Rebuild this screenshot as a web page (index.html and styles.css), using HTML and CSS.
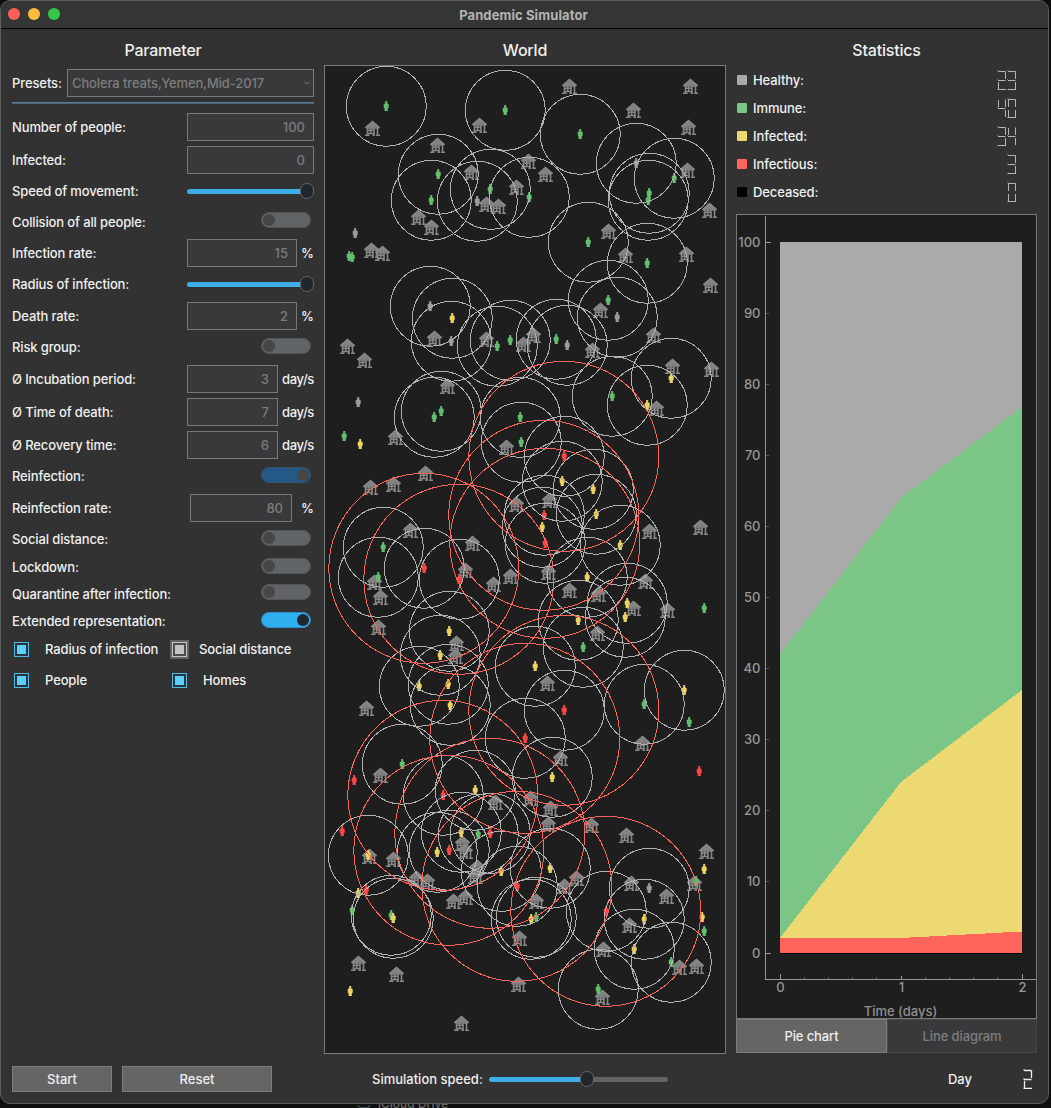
FILE: index.html
```html
<!DOCTYPE html>
<html lang="en">
<head>
<meta charset="utf-8">
<title>Pandemic Simulator</title>
<link rel="stylesheet" href="styles.css">
</head>
<body>
<div class="window">
  <header class="titlebar">
    <div class="lights"><i class="close"></i><i class="min"></i><i class="max"></i></div>
    <h1>Pandemic Simulator</h1>
  </header>

  <main class="columns">
    <section class="params">
      <h2>Parameter</h2>
      <div class="row preset"><label>Presets:</label><div class="combo"><span>Cholera treats,Yemen,Mid-2017</span><svg width="6" height="4" viewBox="0 0 6 4"><path d="M.5 .8L3 3L5.5 .8" fill="none" stroke="#77787a"/></svg></div></div>
      <hr>
      <div class="form">
        <div class="row h28"><label>Number of people:</label><div class="box w127">100</div></div>
        <div class="row h28"><label>Infected:</label><div class="box w127">0</div></div>
        <div class="row h24"><label>Speed of movement:</label><div class="slider full"><b></b></div></div>
        <div class="row h26"><label>Collision of all people:</label><div class="toggle"></div></div>
        <div class="row h28"><label>Infection rate:</label><div class="box w110">15</div><span class="unit">%</span></div>
        <div class="row h25"><label>Radius of infection:</label><div class="slider full"><b></b></div></div>
        <div class="row h28"><label>Death rate:</label><div class="box w110">2</div><span class="unit">%</span></div>
        <div class="row h25"><label>Risk group:</label><div class="toggle"></div></div>
        <div class="row h28"><label>Ø Incubation period:</label><div class="box w91">3</div><span class="unit days">day/s</span></div>
        <div class="row h28"><label>Ø Time of death:</label><div class="box w91">7</div><span class="unit days">day/s</span></div>
        <div class="row h28"><label>Ø Recovery time:</label><div class="box w91">6</div><span class="unit days">day/s</span></div>
        <div class="row h25"><label>Reinfection:</label><div class="toggle on dim"></div></div>
        <div class="row h28"><label>Reinfection rate:</label><div class="box w102">80</div><span class="unit">%</span></div>
        <div class="row h24"><label>Social distance:</label><div class="toggle"></div></div>
        <div class="row h22"><label>Lockdown:</label><div class="toggle"></div></div>
        <div class="row h21"><label>Quarantine after infection:</label><div class="toggle"></div></div>
        <div class="row h25"><label>Extended representation:</label><div class="toggle on"></div></div>
      </div>
      <div class="checks">
        <div class="check"><i></i><span>Radius of infection</span></div>
        <div class="check gray"><i></i><span>Social distance</span></div>
        <div class="check"><i></i><span>People</span></div>
        <div class="check wide"><i></i><span>Homes</span></div>
      </div>
    </section>

    <section class="world">
      <h2>World</h2>
      <svg id="world" width="402" height="989" viewBox="324 65 402 989">
        <defs>
          <g id="home">
            <path d="M.5 7L7.5 1L14.5 7" fill="none" stroke="#898989" stroke-width="2.200"/>
            <path d="M7.5 1L2 6.500H13Z" fill="#828282"/>
            <path d="M2.500 6V14M12.500 6V14M9 7V14M2.500 12.500H9M5.700 6V12M2.500 9.200H9M2.500 7H12.500M0 14.200H4.500M7.500 14.200H10M11 14.200H15" fill="none" stroke="#868686" stroke-width="1.600"/>
          </g>
          <path id="person" d="M-1 -5H1V-2.700L2.500 -1.700V1.500L1.600 2.500V5H-1.600V2.500L-2.500 1.500V-1.700L-1 -2.700Z"/>
        </defs>
      </svg>
    </section>

    <section class="stats">
      <h2>Statistics</h2>
      <ul class="legend">
        <li><i class="healthy"></i><span>Healthy:</span><div class="lcd" data-value="23"></div></li>
        <li><i class="immune"></i><span>Immune:</span><div class="lcd" data-value="40"></div></li>
        <li><i class="infected"></i><span>Infected:</span><div class="lcd" data-value="34"></div></li>
        <li><i class="infectious"></i><span>Infectious:</span><div class="lcd" data-value="3"></div></li>
        <li><i class="deceased"></i><span>Deceased:</span><div class="lcd" data-value="0"></div></li>
      </ul>
      <svg class="chart" width="301" height="805" viewBox="736 214 301 805">
        <g shape-rendering="crispEdges">
          <path fill="#aaaaaa" d="M780 242H1022V407L901 498L780 654Z"/>
          <path fill="#7bc587" d="M780 654L901 498L1022 407V690L901 782L780 938Z"/>
          <path fill="#ecd972" d="M780 938L901 782L1022 690V932L901 938Z"/>
          <path fill="#ff655a" d="M780 938H901L1022 931.500V953H780Z"/>
          <path stroke="#969696" fill="none" d="M765.500 216V979.500H1037M765 242.500h6M765 953.500h6M780.500 979v-5M901.500 979v-3M1022.500 979v-5"/>
          <path stroke="#000" d="M780 953.500h242"/>
        </g>
        <path id="ticks" stroke="#555" fill="none" shape-rendering="crispEdges"/>
        <g id="labels"></g>
        <text x="900.500" y="1016" text-anchor="middle" fill="#8e8e8e">Time (days)</text>
      </svg>
      <div class="tabs"><button class="active">Pie chart</button><button>Line diagram</button></div>
    </section>
  </main>

  <footer>
    <button class="start">Start</button>
    <button class="reset">Reset</button>
    <label class="speed">Simulation speed:</label>
    <div class="slider half"><b></b></div>
    <span class="day">Day</span>
    <div class="lcd bright" data-value="2"></div>
  </footer>
</div>
<div class="desktop"><i></i><span>iCloud Drive</span></div>
<script src="script.js"></script>
</body>
</html>
```

FILE: styles.css
```css
* { box-sizing: border-box; }
body {
  margin: 0; width: 1051px; height: 1108px; overflow: hidden; background: #0d0d0e;
  font: 500 13px/16px Inter, "Liberation Sans", sans-serif; color: #efefef;
}
.window {
  width: 1049px; height: 1104px; background: #323232;
  border: 1px solid #5c5d5d; border-radius: 10px; overflow: hidden;
}
.titlebar {
  height: 28px; background: #343635; border-bottom: 1px solid #000;
  display: grid; grid-template-columns: 65px 1fr 65px; align-items: center;
}
.titlebar h1 { margin: 0; font-size: 13px; font-weight: 700; text-align: center; color: #b3b4b4; line-height: 24px; letter-spacing: .1px; position: relative; left: -1px; }
.lights { display: flex; gap: 8px; padding-left: 7px; margin-top: -1px; }
.lights i { width: 12px; height: 12px; border-radius: 50%; }
.close { background: #fe5f57; }
.min { background: #febb40; }
.max { background: #33c748; }

.columns { display: grid; grid-template-columns: 302px 402px 301px; column-gap: 10px; padding-left: 11px; height: 1025px; }
h2 { margin: 0; height: 36px; padding-top: 11px; font-size: 16px; font-weight: 500; line-height: 20px; text-align: center; letter-spacing: -.2px; }

.params { padding-top: 4px; margin-top: -4px; }
.row { display: flex; align-items: center; }
.row label { margin-right: auto; white-space: nowrap; letter-spacing: -.13px; }
.preset { height: 28px; margin-top: 4px; }
.row.preset label { margin-right: 0; width: 55px; letter-spacing: -.1px; }
.combo { flex: 1; height: 28px; border: 1px solid #77787a; background: #39393b; color: #7c7c7d; display: flex; align-items: center; justify-content: space-between; padding: 0 3px 0 4px; letter-spacing: -.12px; }
hr { margin: 5px 0 9px; border: 0; height: 2px; background: linear-gradient(#5d86a3, #4a5966); }
.form { display: flex; flex-direction: column; gap: 5px; }
.h28 { height: 28px; } .h26 { height: 26px; } .h25 { height: 25px; padding-bottom: 1px; } .h24 { height: 24px; } .h22 { height: 22px; } .h21 { height: 21px; }
.h26 label { padding-top: 1px; }
.box { height: 28px; border: 1px solid #77787a; background: #39393b; color: #7c7c7d; text-align: right; line-height: 27px; padding-right: 8px; }
.w127 { width: 127px; } .w110 { width: 110px; } .w91 { width: 91px; } .w102 { width: 102px; margin-right: 5px; }
.unit { margin-left: 5px; width: 12px; display: flex; justify-content: flex-end; }
.unit.days { width: 31px; letter-spacing: -.35px; }
.slider { height: 5px; border-radius: 3px; background: #606467; display: flex; align-items: center; }
.slider b { width: 14px; height: 16px; border-radius: 7px; border: 1px solid #626567; background: #20262b; }
.slider.full { width: 127px; background: #3daee9; justify-content: flex-end; }
.toggle { width: 50px; height: 16px; border-radius: 8px; background: #606467; border: 1px solid #54575a; margin: -2px 3px 0 0; display: flex; align-items: center; padding: 0 1px; }
.toggle::before { content: ""; width: 12px; height: 12px; border-radius: 50%; background: #464646; }
.toggle.on { justify-content: flex-end; background: #2fafee; border-color: #2b8dc1; }
.toggle.on::before { background: #22272b; }
.toggle.on.dim { background: #235887; border-color: #35536b; }
.toggle.on.dim::before { background: #464646; }
.h21 .toggle { margin-top: -3px; }
.checks { display: grid; grid-template-columns: 158px 1fr; row-gap: 11px; margin-top: 5px; padding-left: 2px; letter-spacing: -.13px; }
.check { display: flex; align-items: center; height: 20px; white-space: nowrap; }
.check i { width: 15px; height: 15px; border: 1px solid #4eb9e4; background: #5bcfff; box-shadow: inset 0 0 0 2px #2b333a; margin-right: 16px; }
.check.gray i { border-color: #c4c4c4; background: #c4c4c4; box-shadow: inset 0 0 0 2px #4b4d4e, 0 0 0 2px #606467; margin-right: 12px; }

#world { display: block; background: #1e1e1e; border: 0; outline: 1px solid #77787a; outline-offset: -1px; }
#world circle { fill: none; shape-rendering: crispEdges; }
.near { r: 40px; stroke: #b0b0b0; }
.far { r: 95px; stroke: #ff655a; }

.legend { list-style: none; margin: 0; padding: 1px 20px 8px 0; height: 149px; letter-spacing: -.1px; }
.legend li { display: flex; align-items: center; height: 28px; padding-left: 1px; }
.legend i { width: 10px; height: 10px; border-radius: 1px; margin-right: 6px; }
.legend span { margin-right: auto; }
.healthy { background: #aaa; }
.immune { background: #7bc587; }
.infected { background: #ecd972; }
.infectious { background: #ff655a; }
.deceased { background: #000; }
.lcd { display: flex; }
.lcd svg { display: block; }
.lcd line { stroke: #b5b5b5; stroke-width: 1; visibility: hidden; }
.lcd line.lit { visibility: visible; }
.lcd.bright line { stroke: #f0f0f0; stroke-width: 1.3; }

.chart { display: block; background: #1e1e1e; outline: 1px solid #77787a; outline-offset: -1px; font: 500 13px Inter, sans-serif; }
.tabs { display: grid; grid-template-columns: 151px 150px; height: 34px; }
button { font: inherit; color: #eee; background: #656565; border: 1px solid #7d7d7d; padding: 0; }
.tabs button { background: #39393b; color: #7c7c7d; border-color: #47484a; letter-spacing: -.1px; }
.tabs .active { background: #656565; color: #eee; border-color: #7d7d7d; }

footer { display: flex; align-items: center; height: 50px; padding: 0 15px 0 11px; }
footer button { height: 26px; }
.start { width: 100px; margin-right: 10px; }
.reset { width: 150px; margin-right: 100px; }
.speed { width: 117px; }
.slider.half { width: 179px; background: linear-gradient(90deg, #3daee9 98px, #606467 98px); }
.slider.half b { margin-left: 91px; }
.day { margin-left: auto; margin-right: 51px; }

.desktop { height: 4px; overflow: hidden; padding-left: 358px; display: flex; align-items: flex-end; color: #6a6a6a; font-size: 12px; line-height: 9px; background: #101011; }
.desktop i { width: 12px; height: 3px; border: 1px solid #3c5560; border-top: 0; border-radius: 0 0 3px 3px; margin-right: 8px; }
```

FILE: script.js
```js
const NS = "http://www.w3.org/2000/svg";
const world = document.getElementById("world");

function add(parent, tag, attrs) {
  const el = document.createElementNS(NS, tag);
  for (const k in attrs) el.setAttribute(k, attrs[k]);
  parent.appendChild(el);
  return el;
}

// Centres of the homes
const homes = [
  [569,87],[690,87],[633,111],[688,128],[372,129],[479,126],[437,146],[528,162],[545,175],[471,173],[516,188],[486,205],[498,207],[687,171],[709,211],[418,218],[431,228],[371,251],[382,254],[608,232],[625,256],[686,255],[710,286],
  [347,347],[364,361],[434,339],[486,340],[523,345],[533,336],[592,351],[600,311],[653,336],[672,367],[711,370],[656,409],[447,387],[395,438],[506,448],[425,474],[393,485],[370,488],[516,505],[549,501],
  [410,531],[472,544],[465,571],[493,585],[510,577],[548,573],[569,591],[598,595],[633,609],[667,611],[645,582],[649,532],[700,528],[597,634],[374,583],[380,598],[378,628],[456,644],[455,657],[547,684],
  [366,709],[642,744],[560,759],[380,776],[495,803],[530,799],[550,809],[548,825],[591,826],[626,836],[706,852],[462,844],[465,852],[369,857],[393,860],[477,868],
  [475,877],[416,879],[427,882],[576,879],[564,887],[631,884],[694,884],[666,897],[465,898],[453,902],[536,902],[629,926],[519,939],[603,950],[679,968],[696,967],[358,964],[396,975],[518,985],[602,998],[461,1024]
];

// x, y, state (g immune, h healthy, y infected, r infectious), 1 when away from home
const people = [
  [386,106,"g",1],[505,110,"g",1],[580,134,"g",1],[438,174,"g",1],[431,200,"g",1],[490,189,"g",1],[477,201,"h",1],[529,197,"g",1],[636,163,"h",1],[674,178,"g",1],[648,200,"g",1],[649,193,"g",1],[355,233,"h",0],[349,256,"g",0],[352,257,"g",0],[588,242,"g",1],[647,263,"g",1],
  [430,306,"h",1],[452,318,"y",1],[451,341,"h",1],[497,346,"g",1],[510,340,"g",1],[556,339,"g",1],[567,345,"h",1],[608,300,"g",1],[617,317,"h",1],[671,378,"y",1],[647,405,"y",1],[612,396,"g",1],[358,402,"h",0],[434,417,"g",1],[441,411,"g",1],[344,436,"g",0],[360,444,"y",0],[520,417,"g",1],[521,442,"g",1],[564,456,"r",1],[562,481,"y",1],[593,489,"y",1],[596,514,"y",1],
  [542,527,"y",1],[544,515,"r",1],[545,543,"r",1],[620,545,"y",1],[587,577,"y",1],[383,547,"g",1],[378,577,"g",1],[424,568,"r",1],[459,579,"r",1],[627,603,"y",1],[625,617,"y",1],[704,608,"g",0],[578,620,"y",1],[583,647,"g",1],[449,631,"y",1],[440,655,"y",1],[535,666,"y",1],[419,686,"y",1],[448,684,"y",1],
  [450,705,"y",1],[684,690,"y",1],[644,704,"g",1],[689,722,"g",0],[564,710,"r",1],[525,738,"r",1],[402,764,"g",1],[354,780,"r",0],[552,777,"y",1],[443,795,"r",1],[475,790,"y",1],[699,771,"r",0],[342,831,"r",0],[461,832,"y",1],[478,834,"g",1],[490,833,"r",1],[437,852,"y",1],[449,850,"r",1],[368,855,"y",1],[501,871,"y",1],[550,868,"y",1],[704,869,"y",0],
  [517,886,"r",1],[366,890,"r",0],[358,893,"y",0],[352,910,"g",0],[391,915,"g",1],[393,918,"y",1],[536,917,"g",1],[531,919,"y",1],[606,911,"r",1],[696,881,"g",0],[649,888,"h",1],[644,919,"y",1],[702,917,"y",0],[704,931,"g",0],[634,949,"y",1],[671,962,"g",1],[598,989,"g",1],[350,991,"y",0]
];
const colors = { g: "#62bd6f", h: "#9b9b9b", y: "#ecd45f", r: "#fd4545" };

for (const [x, y] of homes) add(world, "use", { href: "#home", x: x - 7, y: y - 8 });
for (const [x, y, s] of people) add(world, "use", { href: "#person", x: x + .2, y, fill: colors[s] });
for (const [x, y, , out] of people) if (out) add(world, "circle", { class: "near", cx: x + .3, cy: y + .3 });
for (const [x, y, s, out] of people) if (out && s === "r") add(world, "circle", { class: "far", cx: x - .2, cy: y + .3 });

// Chart axes
const labels = document.getElementById("labels");
let ticks = "";
for (let v = 0; v <= 100; v += 10) {
  const y = 953 - v * 7.11;
  add(labels, "text", { x: 760.5, y: y + 4.5, "text-anchor": "end", fill: "#979797" }).textContent = v;
  if (v % 100) ticks += `M766 ${Math.floor(y) + .5}h3`;
}
for (let d = 0; d <= 2; d++) {
  add(labels, "text", { x: 780.5 + d * 121, y: 992, "text-anchor": "middle", fill: "#979797" }).textContent = d;
}
for (let i = 1; i < 10; i++) if (i !== 5) ticks += `M${Math.floor(780 + i * 24.2) + .5} 979v-2`;
document.getElementById("ticks").setAttribute("d", ticks);

// Seven-segment counters; a segment is one or two thin lines
const segments = {
  a: [[.5, .5, 2, 1.5], [1.5, 1.5, 8.5, 1.5]],
  b: [[8.5, 1.5, 8.5, 9]],
  c: [[8.5, 12, 8.5, 19]],
  d: [[.5, 19.5, 9, 19.5]],
  e: [[1.5, 12, 1.5, 19]],
  f: [[1.5, 2, 1.5, 9]],
  g: [[.5, 9.5, 2, 11], [1.5, 10.5, 8.5, 10.5]]
};
const lit = { 0: "abcdef", 2: "abdeg", 3: "abcdg", 4: "bcfg" };
for (const lcd of document.querySelectorAll(".lcd")) {
  lcd.setAttribute("aria-label", lcd.dataset.value);
  for (const digit of lcd.dataset.value) {
    const svg = add(lcd, "svg", { width: 10, height: 20, viewBox: "0 0 10 20" });
    for (const s in segments)
      for (const [x1, y1, x2, y2] of segments[s])
        add(svg, "line", { x1, y1, x2, y2, class: lit[digit].includes(s) ? "lit" : "" });
  }
}
```
